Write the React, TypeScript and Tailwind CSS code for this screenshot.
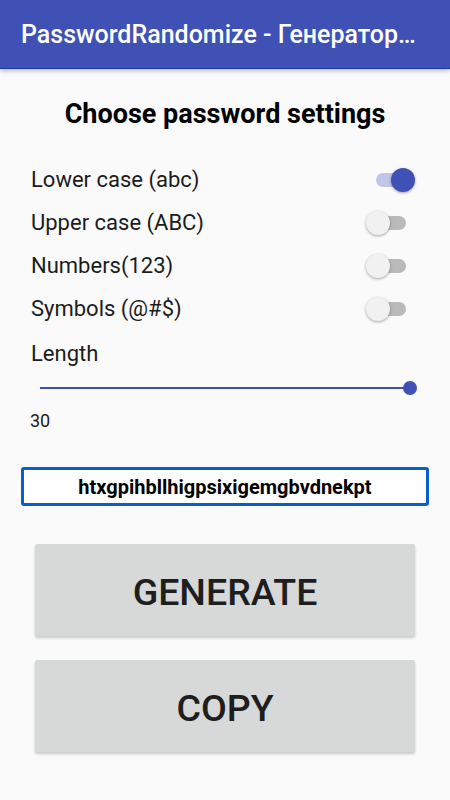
import React from "react";

function Switch({ on }: { on: boolean }) {
  return (
    <div className="relative w-[49px] h-[26px] shrink-0">
      <div
        className={
          "absolute left-[10px] top-[6px] w-[30px] h-[14px] rounded-full " +
          (on ? "bg-[#c0c6e8]" : "bg-[#bababa]")
        }
      />
      <div
        className={
          "absolute top-[1px] w-[24px] h-[24px] rounded-full shadow-[0_1px_3px_rgba(0,0,0,0.35)] " +
          (on ? "left-[25px] bg-[#3f51b5]" : "left-0 bg-[#f1f1f1]")
        }
      />
    </div>
  );
}

const rows: { label: string; on: boolean }[] = [
  { label: "Lower case (abc)", on: true },
  { label: "Upper case (ABC)", on: false },
  { label: "Numbers(123)", on: false },
  { label: "Symbols (@#$)", on: false },
];

export default function App() {
  return (
    <div
      className="min-h-screen w-[450px] bg-[#fafafa] flex flex-col"
      style={{ fontFamily: "Roboto, 'Noto Sans', sans-serif" }}
    >
      <div className="h-[69px] bg-[#3f51b5] border-b border-[#1e3aa8] shadow-[0_2px_4px_rgba(0,0,0,0.25)] flex items-center pl-[21px] relative z-10">
        <span className="text-white text-[25px] font-medium whitespace-nowrap leading-none">
          PasswordRandomize - Генератор…
        </span>
      </div>

      <div className="mt-[20px] h-[50px] flex items-center justify-center">
        <span className="text-[27px] font-bold text-black">Choose password settings</span>
      </div>

      <div className="mt-[19px] flex flex-col pl-[31px] pr-[35px]">
        {rows.map((r) => (
          <div key={r.label} className="h-[43px] flex items-center justify-between">
            <span className="text-[22px] text-[#1c1c1c]">{r.label}</span>
            <Switch on={r.on} />
          </div>
        ))}
        <div className="h-[46px] flex items-center">
          <span className="text-[22px] text-[#1c1c1c]">Length</span>
        </div>
      </div>

      <div className="h-[24px] flex items-center pl-[40px]">
        <div className="relative w-[370px] h-[2px] bg-[#3f51b5]">
          <div className="absolute right-[-7px] top-[-6px] w-[14px] h-[14px] rounded-full bg-[#3f51b5]" />
        </div>
      </div>

      <div className="h-[40px] flex items-center pl-[30px]">
        <span className="text-[18px] text-[#1c1c1c]">30</span>
      </div>

      <div className="mt-[27px] px-[21px]">
        <div className="h-[39px] border-[3px] border-[#0a5ec8] rounded-[3px] bg-white flex items-center justify-center">
          <span className="text-[20px] font-bold text-black">htxgpihbllhigpsixigemgbvdnekpt</span>
        </div>
      </div>

      <div className="mt-[38px] px-[35px] flex flex-col gap-[24px]">
        <div className="h-[92px] pt-[4px] bg-[#d7d8d8] rounded-[2px] shadow-[0_2px_3px_rgba(0,0,0,0.2)] flex items-center justify-center">
          <span className="text-[37.5px] font-medium text-[#1e1e1e]">GENERATE</span>
        </div>
        <div className="h-[92px] pt-[4px] bg-[#d7d8d8] rounded-[2px] shadow-[0_2px_3px_rgba(0,0,0,0.2)] flex items-center justify-center">
          <span className="text-[37.5px] font-medium text-[#1e1e1e]">COPY</span>
        </div>
      </div>
    </div>
  );
}
